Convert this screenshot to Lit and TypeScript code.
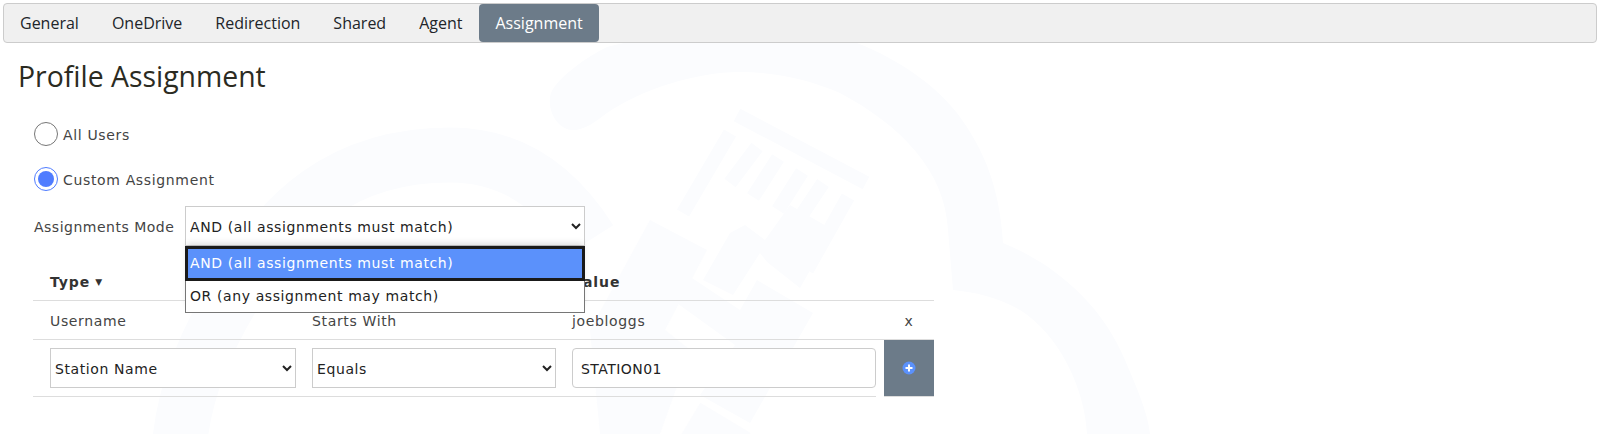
import { LitElement, html, css } from "lit";
import { customElement } from "lit/decorators.js";

const tabs = ["General", "OneDrive", "Redirection", "Shared", "Agent", "Assignment"];

@customElement("app-root")
export class AppRoot extends LitElement {
  static styles = css`
    :host { display: block; position: relative; width: 1601px; height: 434px; overflow: hidden; background: #fff; color: #333; font-family: "DejaVu Sans", sans-serif; font-size: 14px; }
    .wm { position: absolute; left: 0; top: 0; width: 1601px; height: 434px; }
    .wm .s { fill: none; stroke: #fbfcfe; }
    .wm .f { fill: #fbfcfe; }
    .content { position: relative; }
    .nav { margin: 3px 4px 0 3px; height: 38px; background: #f0f0f0; border: 1px solid #ccc; border-radius: 4px; display: flex; gap: 1px; font-family: "Open Sans", sans-serif; font-size: 16px; color: #212529; }
    .tab { height: 38px; padding: 0 16px; display: flex; align-items: center; box-sizing: border-box; }
    .tab.active { background: #6c7b89; color: #fff; border-radius: 4px; }
    h1 { margin: 13px 0 0 18px; font: 400 28.4px/40px "Open Sans", sans-serif; color: #2b2b22; height: 40px; }
    .radio { display: flex; align-items: center; gap: 5px; margin-left: 34px; height: 24px; letter-spacing: .65px; color: #444; }
    .radio .t { padding-top: 2px; }
    .r1 { margin-top: 26px; }
    .r2 { margin-top: 21px; }
    .circle { width: 24px; height: 24px; border-radius: 50%; border: 1px solid #767676; box-sizing: border-box; background: #fff; }
    .circle.on { border-color: #4f7cff; display: flex; align-items: center; justify-content: center; }
    .circle.on::after { content: ""; width: 16px; height: 16px; border-radius: 50%; background: #4f7cff; }
    .mode { display: flex; align-items: center; margin: 15px 0 0 34px; height: 40px; position: relative; letter-spacing: .5px; color: #444; }
    .mode label { width: 151px; padding-top: 2px; }
    select { font: 14px "DejaVu Sans", sans-serif; letter-spacing: .6px; color: #222; background: #fff; border: 1px solid #ccc; box-sizing: border-box; height: 40px; padding: 2px 0 0; border-radius: 0; }
    .mode select { width: 400px; }
    .pop { position: absolute; left: 151px; top: 40px; width: 400px; box-sizing: border-box; border: 1px solid #767676; background: #fff; box-shadow: 0 -5px 6px -2px rgba(0,0,0,.13); z-index: 2; color: #222; letter-spacing: .6px; }
    .opt { height: 32px; padding-left: 4px; display: flex; align-items: center; box-sizing: border-box; }
    .opt.sel { background: #5b91fb; color: #fff; outline: 3px solid #1a1a1a; outline-offset: -2px; height: 33px; padding-bottom: 2px; }
    .tbl { margin: 15px 0 0 33px; width: 901px; display: grid; grid-template-columns: 262px 260px 321px 58px; letter-spacing: .65px; color: #444; }
    .c { padding-left: 17px; display: flex; align-items: center; box-sizing: border-box; border-bottom: 1px solid #ddd; }
    .h { height: 40px; font-weight: 700; color: #333; padding-top: 3px; letter-spacing: .9px; }
    .b { height: 39px; padding-top: 2px; }
    .i { height: 57px; }
    .i select { flex: none; width: calc(100% + 1px); }
    .i input { width: 100%; }
    .x { justify-content: center; padding-left: 8px; }
    input { font: 14px "DejaVu Sans", sans-serif; letter-spacing: .45px; color: #222; height: 40px; box-sizing: border-box; border: 1px solid #ccc; border-radius: 4px; padding: 2px 8px 0; background: #fff; }
    .add { background: #6c7b89; display: flex; align-items: center; justify-content: center; border-bottom: 1px solid #ddd; margin-left: 8px; }
    .add svg { width: 14px; height: 14px; }
    .arrow { font-size: 9px; margin-left: 5px; }
  `;

  render() {
    return html`
      <svg class="wm" viewBox="0 0 1601 434">
        <path class="f" d="M550 97C552 80 590 55 607 47L740 15C790 20 830 30 857 43C900 60 935 85 957 113C985 150 1000 190 1003 243C1050 262 1100 300 1125 360C1140 395 1148 415 1150 434L1087 434C1085 390 1060 335 1020 310C1000 298 975 292 953 290L948 230C945 170 900 125 840 93C810 80 775 72 740 72C695 72 640 90 607 113C595 122 585 130 573 130C560 130 548 115 550 97Z" />
        <path class="s" stroke-width="55" d="M180 440C185 390 205 340 240 285C280 215 340 155 450 155C510 155 555 185 590 240" />
        <path class="s" stroke-width="14" d="M737 115L866 183M730 133L683 213M757 147L730 183M778 158L753 197M802 172L778 210M823 183L797 222M848 197L807 270" />
        <path class="f" d="M650 220L707 250L665 330L690 350L660 434L600 434L590 330Z" />
        <path class="f" d="M730 233L703 280L733 295L760 253L767 262L800 288L833 230L790 205L765 240L745 225Z" />
        <path class="f" d="M757 280L813 313L750 423L700 395L735 345L663 293L680 270L740 310Z" />
        <path class="s" stroke-width="40" d="M690 420L740 450" />
      </svg>
      <div class="content">
        <div class="nav">
          ${tabs.map((t) => html`<div class="tab ${t === "Assignment" ? "active" : ""}">${t}</div>`)}
        </div>
        <h1>Profile Assignment</h1>
        <div class="radio r1"><span class="circle"></span><span class="t">All Users</span></div>
        <div class="radio r2"><span class="circle on"></span><span class="t">Custom Assignment</span></div>
        <div class="mode">
          <label>Assignments Mode</label>
          <select><option>AND (all assignments must match)</option></select>
          <div class="pop">
            <div class="opt sel">AND (all assignments must match)</div>
            <div class="opt">OR (any assignment may match)</div>
          </div>
        </div>
        <div class="tbl">
          <div class="c h">Type<span class="arrow">▼</span></div>
          <div class="c h"></div>
          <div class="c h">Value</div>
          <div class="c h"></div>
          <div class="c b">Username</div>
          <div class="c b">Starts With</div>
          <div class="c b">joebloggs</div>
          <div class="c b x">x</div>
          <div class="c i"><select><option>Station Name</option></select></div>
          <div class="c i"><select><option>Equals</option></select></div>
          <div class="c i"><input value="STATION01" /></div>
          <div class="add">
            <svg viewBox="0 0 14 14"><circle cx="7" cy="7" r="6.5" fill="#5b91fb" /><path d="M3.5 7h7M7 3.5v7" stroke="#fff" stroke-width="2" /></svg>
          </div>
        </div>
      </div>
    `;
  }
}
